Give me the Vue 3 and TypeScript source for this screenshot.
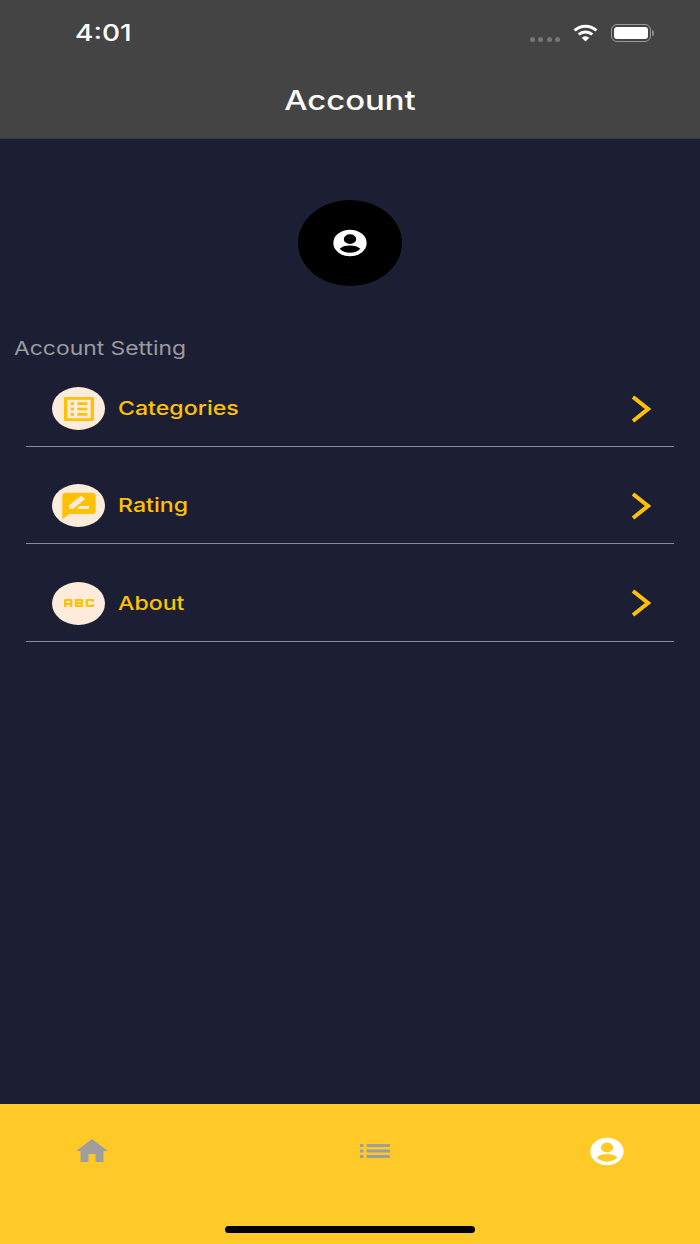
<script setup lang="ts">
// Account screen: the source shot is stretched wider than tall, so icons use
// preserveAspectRatio="none" and text goes through .wide
interface Row {
    label: string;
    icon: string;
}

const accountIcon =
    "M12 2a10 10 0 1 0 0 20 10 10 0 0 0 0-20zm0 3.4a3.7 3.7 0 1 1 0 7.4 3.7 3.7 0 0 1 0-7.4zM5.8 16.4c1.2-1.8 3.6-2.6 6.2-2.6s5 .8 6.2 2.6c-1.4 1.9-3.6 3-6.2 3s-4.8-1.1-6.2-3z";

const rows: Row[] = [
    {
        label: "Categories",
        icon: "M19 5v14H5V5h14m1.1-2H3.9c-.5 0-.9.4-.9.9v16.2c0 .4.4.9.9.9h16.2c.4 0 .9-.5.9-.9V3.9c0-.5-.5-.9-.9-.9zM11 7h6v2h-6V7zm0 4h6v2h-6v-2zm0 4h6v2h-6zM7 7h2v2H7zm0 4h2v2H7zm0 4h2v2H7z",
    },
    {
        label: "Rating",
        icon: "M20 2H4c-1.1 0-1.99.9-1.99 2L2 22l4-4h14c1.1 0 2-.9 2-2V4c0-1.1-.9-2-2-2zM6 14v-2.47l6.88-6.88c.2-.2.51-.2.71 0l1.77 1.77c.2.2.2.51 0 .71L8.47 14H6zm12 0h-7.5l2-2H18v2z",
    },
    {
        label: "About",
        icon: "M21 11h-1.5v-.5h-2v3h2V13H21v1c0 .55-.45 1-1 1h-3c-.55 0-1-.45-1-1v-4c0-.55.45-1 1-1h3c.55 0 1 .45 1 1v1zM8 10v5H6.5v-1.5h-2V15H3v-5c0-.55.45-1 1-1h3c.55 0 1 .45 1 1zm-1.5.5h-2V12h2v-1.5zm7 1.5c.55 0 1 .45 1 1v1c0 .55-.45 1-1 1h-4V9h4c.55 0 1 .45 1 1v1c0 .55-.45 1-1 1zM11 10.5v.75h2v-.75h-2zm2 2.25h-2v.75h2v-.75z",
    },
];
</script>

<template>
    <div class="screen">
        <header class="header">
            <div class="status">
                <span class="time wide">4:01</span>
                <div class="status-right">
                    <div class="dots">
                        <i></i><i></i><i></i><i></i>
                    </div>
                    <svg class="wifi" viewBox="0 0 24 18" preserveAspectRatio="none" fill="none" stroke="#fff" stroke-width="3">
                        <path d="M1.5 6.5a15 15 0 0 1 21 0" />
                        <path d="M5.5 10.5a9.5 9.5 0 0 1 13 0" />
                        <path d="M12 17.5l-3.6-3.8a5 5 0 0 1 7.2 0z" fill="#fff" stroke="none" />
                    </svg>
                    <div class="battery"><span></span></div>
                    <span class="nub"></span>
                </div>
            </div>
            <h1 class="title wide-center">Account</h1>
        </header>

        <main class="main">
            <div class="avatar">
                <svg class="avatar-icon" viewBox="0 0 24 24" preserveAspectRatio="none">
                    <path :d="accountIcon" fill="#fff" fill-rule="evenodd" />
                </svg>
            </div>

            <p class="section-label wide">Account Setting</p>

            <ul class="list">
                <li v-for="row in rows" :key="row.label" class="row">
                    <span class="row-icon">
                        <svg viewBox="0 0 24 24" preserveAspectRatio="none">
                            <path :d="row.icon" fill="#ffc107" />
                        </svg>
                    </span>
                    <span class="row-label wide">{{ row.label }}</span>
                    <svg class="chevron" viewBox="0 0 20 28" fill="none" stroke="#ffc107" stroke-width="4">
                        <path d="M2 2l15 12L2 26" />
                    </svg>
                </li>
            </ul>
        </main>

        <nav class="tabs">
            <div class="tab-icons">
                <svg class="tab-home" viewBox="0 0 32 23" preserveAspectRatio="none">
                    <path d="M16 0L0 12h4.500v11h8v-8h7v8h8V12H32z" fill="#9e9e9e" />
                </svg>
                <svg class="tab-list" viewBox="0 0 30 14" preserveAspectRatio="none">
                    <path d="M0 0h3.500v3H0zM0 5.500h3.500v3H0zM0 11h3.500v3H0zM6.500 0H30v3H6.500zM6.500 5.500H30v3H6.500zM6.500 11H30v3H6.500z" fill="#9e9e9e" />
                </svg>
                <svg class="tab-account" viewBox="0 0 24 24" preserveAspectRatio="none">
                    <path :d="accountIcon" fill="#fff" fill-rule="evenodd" />
                </svg>
            </div>
            <div class="home-bar"></div>
        </nav>
    </div>
</template>

<style scoped>
.screen {
    width: 700px;
    height: 1244px;
    display: flex;
    flex-direction: column;
    overflow: hidden;
    background: #1c1f33;
    font-family: Inter, "Liberation Sans", sans-serif;
}
.wide {
    display: inline-block;
    transform: scaleX(1.218);
    transform-origin: left center;
}
.wide-center {
    transform: scaleX(1.218);
}

.header {
    height: 138px;
    flex: none;
    background: #444444;
    border-bottom: 1px solid #3a3b42;
    box-sizing: content-box;
}
.status {
    height: 66px;
    display: flex;
    align-items: center;
    justify-content: space-between;
    padding: 0 46px 0 75px;
}
.time {
    color: #fff;
    font-size: 23px;
    font-weight: 500;
}
.status-right {
    display: flex;
    align-items: center;
}
.dots {
    display: flex;
    gap: 3.300px;
    margin: 12px 13px 0 0;
}
.dots i {
    width: 5px;
    height: 5px;
    border-radius: 50%;
    background: #777;
}
.wifi {
    width: 25px;
    height: 18px;
    margin-right: 13px;
}
.battery {
    width: 40px;
    height: 18px;
    box-sizing: border-box;
    border: 1.5px solid #9a9a9a;
    border-radius: 6px;
    padding: 2px;
}
.battery span {
    display: block;
    height: 100%;
    background: #fff;
    border-radius: 3px;
}
.nub {
    width: 2px;
    height: 6px;
    margin-left: 1px;
    background: #8a8a8a;
    border-radius: 0 2px 2px 0;
}
.title {
    margin: 0;
    padding-top: 6px;
    text-align: center;
    color: #fff;
    font-size: 27px;
    font-weight: 500;
    line-height: 58px;
}

.main {
    flex: 1;
    min-height: 0;
}
.avatar {
    width: 104px;
    height: 86px;
    margin: 61px auto 0;
    border-radius: 50%;
    background: #000;
    display: flex;
    align-items: center;
    justify-content: center;
}
.avatar-icon {
    width: 40px;
    height: 32px;
}
.section-label {
    margin: 50px 0 0 14px;
    color: #9b9b9f;
    font-size: 18.800px;
    line-height: 26px;
}
.list {
    list-style: none;
    margin: 25px 26px 0;
    padding: 0;
}
.row {
    height: 59px;
    margin-bottom: 37.400px;
    padding: 0 22px 0 26px;
    display: flex;
    align-items: flex-start;
    border-bottom: 1px solid #8b8d96;
}
.row-icon {
    width: 53px;
    height: 43px;
    flex: none;
    border-radius: 50%;
    background: #fdebdc;
    display: flex;
    align-items: center;
    justify-content: center;
}
.row-icon svg {
    width: 40px;
    height: 32px;
}
.row-label {
    flex: 1;
    margin-left: 13px;
    color: #ffc107;
    font-size: 19px;
    font-weight: 500;
    line-height: 43px;
}
.chevron {
    width: 20px;
    height: 28px;
    margin: 7.500px 1px 0 -1px;
}

.tabs {
    height: 140px;
    flex: none;
    box-sizing: border-box;
    background: #ffca28;
    display: flex;
    flex-direction: column;
    justify-content: space-between;
    padding: 29px 0 11px;
}
.tab-icons {
    display: flex;
    align-items: center;
    height: 33px;
    padding-left: 76px;
}
.tab-home {
    width: 32px;
    height: 23px;
    margin-top: 2px;
}
.tab-list {
    width: 30px;
    height: 14px;
    margin: 2px 0 0 252px;
}
.tab-account {
    width: 40px;
    height: 33px;
    margin: 3px 0 0 197px;
}
.home-bar {
    width: 250px;
    height: 7px;
    margin: 0 auto;
    border-radius: 4px;
    background: #000;
}
</style>
